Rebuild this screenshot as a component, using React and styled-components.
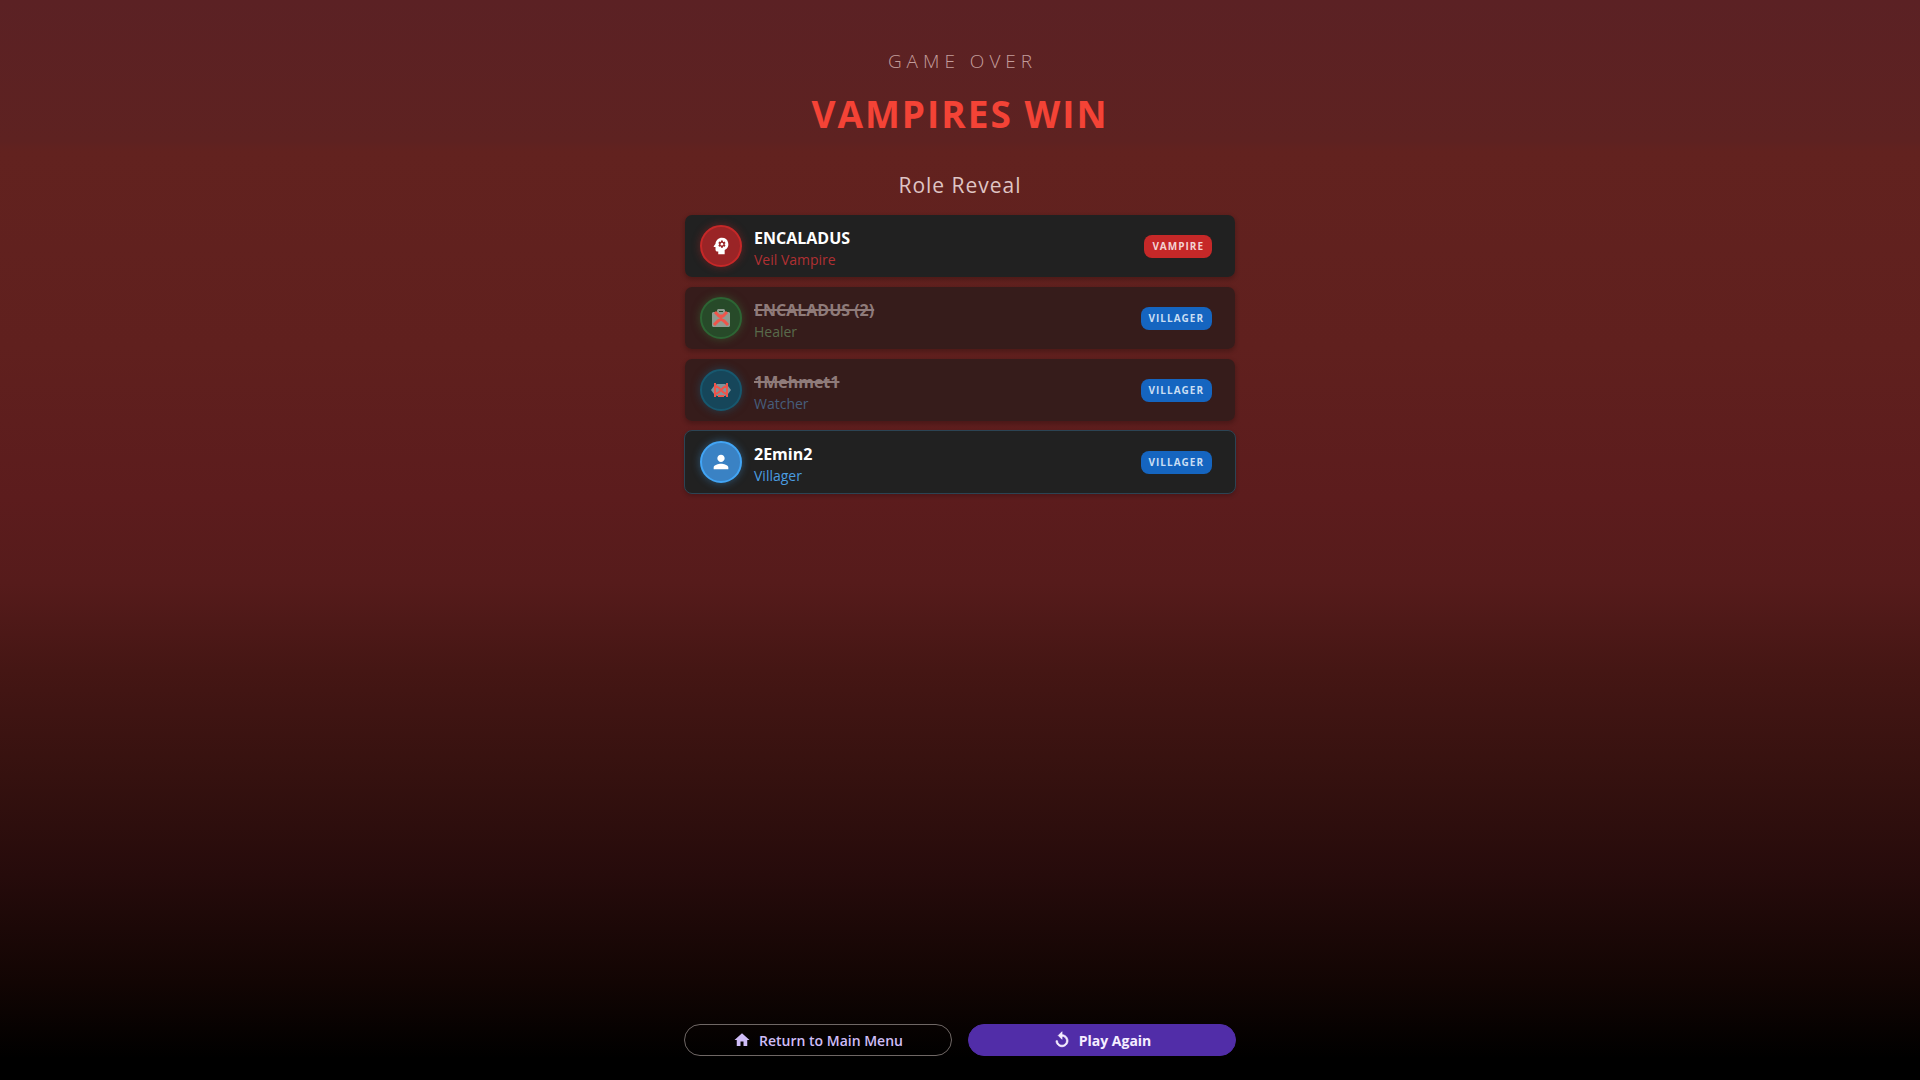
import React from "react";
import styled, { createGlobalStyle } from "styled-components";
import { MdHome, MdPerson, MdPsychology } from "react-icons/md";

const GlobalStyle = createGlobalStyle`
  * { box-sizing: border-box; }
  body {
    margin: 0;
    font-family: "Open Sans", "Noto Sans", sans-serif;
    background: #000;
  }
`;

const Page = styled.main`
  min-height: 100vh;
  display: flex;
  flex-direction: column;
  align-items: center;
  padding: 48px 24px 24px;
  background: linear-gradient(
    180deg,
    #5b2124 0%,
    #5e2221 13%,
    #62221f 14%,
    #60201e 32%,
    #5c1c1d 46%,
    #561b1b 54%,
    #451614 62%,
    #35110f 72%,
    #260b0b 81%,
    #120503 91%,
    #000 98%
  );
`;

const Content = styled.div`
  width: 100%;
  max-width: 552px;
  flex: 1;
  display: flex;
  flex-direction: column;
`;

const Header = styled.header`
  text-align: center;
`;

const Eyebrow = styled.p`
  margin: 0;
  padding-left: 5px;
  color: #c39d9b;
  font-size: 19px;
  line-height: 26px;
  font-weight: 300;
  letter-spacing: 5px;
`;

const Title = styled.h1`
  margin: 14px 0 0;
  color: #f44336;
  font-size: 37px;
  line-height: 52px;
  font-weight: 700;
  letter-spacing: 2px;
`;

const Subtitle = styled.h2`
  margin: 32px 0 16px;
  color: #dfc5c4;
  font-size: 21px;
  line-height: 26px;
  font-weight: 400;
  letter-spacing: 1px;
`;

const List = styled.ul`
  list-style: none;
  margin: 0;
  padding: 0;
  display: flex;
  flex-direction: column;
  gap: 8px;
`;

const Row = styled.li`
  display: flex;
  align-items: center;
  gap: 12px;
  height: 64px;
  padding: 0 23px 0 15px;
  border: 1px solid ${(p) => (p.$self ? "#2c4454" : "transparent")};
  border-radius: 8px;
  background: ${(p) => (p.$dead ? "#361c1b" : "#212121")};
  background-clip: ${(p) => (p.$self ? "border-box" : "padding-box")};
  box-shadow: 0 2px 4px rgba(0, 0, 0, 0.2);
`;

const Avatar = styled.span`
  display: grid;
  place-items: center;
  width: 42px;
  height: 42px;
  border: 2px solid ${(p) => p.$ring};
  border-radius: 50%;
  background: ${(p) => p.$fill};
  box-shadow: 0 0 8px ${(p) => p.$glow};
  color: #fff;
`;

const Identity = styled.div`
  flex: 1;
  display: flex;
  flex-direction: column;
  padding-top: 6px;
`;

const Name = styled.span`
  color: ${(p) => (p.$dead ? "#8f7b7a" : "#fff")};
  font-size: 16px;
  line-height: 22px;
  font-weight: 700;
  text-decoration: ${(p) => (p.$dead ? "line-through 2px" : "none")};
`;

const Role = styled.span`
  color: ${(p) => p.$color};
  font-size: 14px;
  line-height: 22px;
`;

const Team = styled.span`
  padding: 0 8px;
  border-radius: 8px;
  background: ${(p) => (p.$vampire ? "#c62828" : "#1565c0")};
  color: ${(p) => (p.$vampire ? "#f3d3d3" : "#c9def3")};
  font-size: 10px;
  line-height: 23px;
  font-weight: 700;
  letter-spacing: 1px;
`;

const Actions = styled.footer`
  display: grid;
  grid-template-columns: 1fr 1fr;
  gap: 16px;
  margin-top: auto;
`;

const Button = styled.button`
  display: flex;
  align-items: center;
  justify-content: center;
  gap: 8px;
  height: 32px;
  padding: 0 16px;
  border: 1px solid ${(p) => (p.$primary ? "#512da8" : "#6f6765")};
  border-radius: 16px;
  background: ${(p) => (p.$primary ? "#512da8" : "transparent")};
  color: ${(p) => (p.$primary ? "#f5eeff" : "#cfbdf7")};
  font-family: inherit;
  font-size: 14px;
  font-weight: ${(p) => (p.$primary ? 700 : 600)};
  cursor: pointer;
`;

const ReplayIcon = () => (
  <svg width="18" height="18" viewBox="0 0 24 24" aria-hidden="true">
    <path
      fill="currentColor"
      stroke="currentColor"
      d="M12 5V1L7 6l5 5V7c3.31 0 6 2.69 6 6s-2.69 6-6 6-6-2.69-6-6H4c0 4.42 3.58 8 8 8s8-3.58 8-8-3.58-8-8-8z"
    />
  </svg>
);

const MedkitIcon = () => (
  <svg width="20" height="20" viewBox="0 0 20 20" aria-hidden="true">
    <path fill="#8f9a90" d="M7 1h6l1 1v2h4l1 1v13l-1 1H2l-1-1V5l1-1h4V2zM8 3v1h4V3z" />
    <path fill="none" stroke="#f0544a" strokeWidth="3" d="M4 4l4 4h4l4-4M10 7v5M3 17l4-4 3-2 3 2 4 4" />
  </svg>
);

const WatcherIcon = () => (
  <svg width="20" height="20" viewBox="0 0 20 20" aria-hidden="true">
    <path fill="#80959c" d="M0 10l3-4 3-2h8l3 2 3 4-3 4-3 2H6l-3-2z" />
    <path fill="none" stroke="#f0544a" strokeWidth="2" d="M4 3v3l3 1M16 3v3l-3 1M4 17v-3l3-1M16 17v-3l-3-1M4 6v8M16 6v8M7 16h6" />
    <path stroke="#f0544a" strokeWidth="2" d="M7 7l6 6M13 7l-6 6" />
  </svg>
);

const players = [
  { name: "ENCALADUS", role: "Veil Vampire", color: "#b03033", ring: "#c62828", fill: "#9a2426", glow: "rgba(198,40,40,.4)", icon: <MdPsychology size={22} />, vampire: true },
  { name: "ENCALADUS (2)", role: "Healer", color: "#596b4b", ring: "#2d6534", fill: "#274a29", glow: "rgba(56,120,60,.5)", icon: <MedkitIcon />, dead: true },
  { name: "1Mehmet1", role: "Watcher", color: "#465e7c", ring: "#17586f", fill: "#16465a", glow: "rgba(20,95,125,.5)", icon: <WatcherIcon />, dead: true },
  { name: "2Emin2", role: "Villager", color: "#4a9de0", ring: "#42a5f5", fill: "#3a82c4", glow: "rgba(66,165,245,.4)", icon: <MdPerson size={22} />, self: true },
];

export default function App() {
  return (
    <>
      <GlobalStyle />
      <Page>
        <Content>
          <Header>
            <Eyebrow>GAME OVER</Eyebrow>
            <Title>VAMPIRES WIN</Title>
            <Subtitle>Role Reveal</Subtitle>
          </Header>
          <List>
            {players.map((p) => (
              <Row key={p.name} $dead={p.dead} $self={p.self}>
                <Avatar $ring={p.ring} $fill={p.fill} $glow={p.glow}>{p.icon}</Avatar>
                <Identity>
                  <Name $dead={p.dead}>{p.name}</Name>
                  <Role $color={p.color}>{p.role}</Role>
                </Identity>
                <Team $vampire={p.vampire}>{p.vampire ? "VAMPIRE" : "VILLAGER"}</Team>
              </Row>
            ))}
          </List>
          <Actions>
            <Button type="button"><MdHome size={18} />Return to Main Menu</Button>
            <Button type="button" $primary><ReplayIcon />Play Again</Button>
          </Actions>
        </Content>
      </Page>
    </>
  );
}
